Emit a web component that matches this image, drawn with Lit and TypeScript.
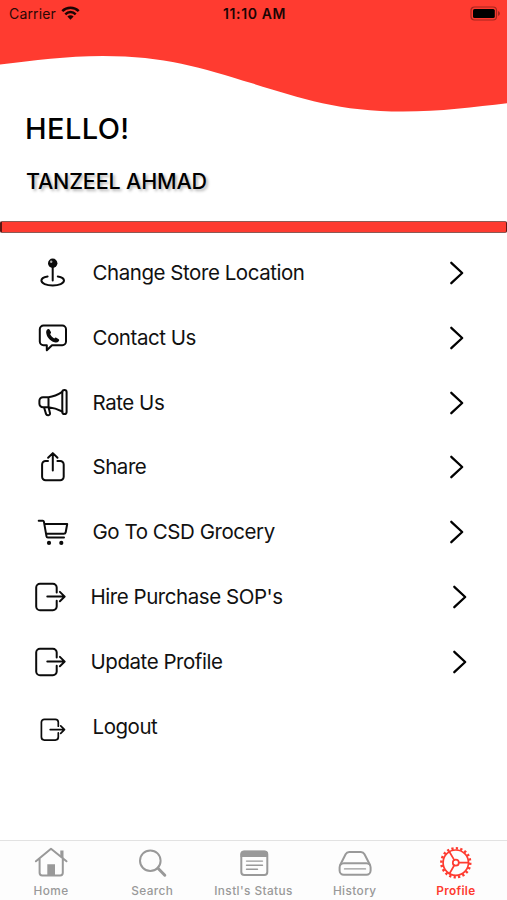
import { LitElement, html, svg, css } from "lit";
import { customElement } from "lit/decorators.js";
import { classMap } from "lit/directives/class-map.js";

const icons: Record<string, unknown> = {
  pin: svg`<path d="M12.6 21.4C8.9 22 6.4 23.6 6.4 25.6c0 2.8 5 4.9 11.3 4.9S29 28.4 29 25.6c0-2-2.5-3.6-6.2-4.2M17.7 12v13.6"/><circle class="fill" cx="17.7" cy="8.2" r="4.7"/><circle class="shine" cx="16.2" cy="6.7" r="1.2"/>`,
  contact: svg`<path d="M8.5 5.5h18.8a3.7 3.7 0 0 1 3.7 3.7v12.3a3.7 3.7 0 0 1-3.7 3.7H17l-5.2 5v-5H8.5a3.7 3.7 0 0 1-3.7-3.7V9.2a3.7 3.7 0 0 1 3.7-3.7Z"/><path class="fill" d="M12.4 9.5c.9-.8 1.900-.5 2.400.5l1.100 2.100c.3.700.1 1.200-.8 2 .8 1.900 2.200 3.300 4.200 4.300.8-.9 1.300-1.100 2-.7l2.100 1.300c.9.600 1 1.500.3 2.300-1 1.200-2.400 1.600-4.200 1-4.600-1.600-7.800-5.200-8.300-9.600-.1-1.300.3-2.500 1.200-3.200Z"/>`,
  horn: svg`<path d="M13.5 12.2H8a3.600 3.600 0 0 0-3.600 3.600v2.900A3.600 3.600 0 0 0 8 22.300h5.500ZM13.500 12.200c5.500-.6 9.500-2.500 13.800-5.300M13.500 22.300c5.500.5 9.500 2 13.800 4.200M9 22.300l2 6.600c.6 2 4.500 1.700 4-.6l-1.400-6"/><rect x="27.3" y="5" width="4.3" height="24" rx="2.1"/>`,
  share: svg`<path d="M13 12H10.6A3.5 3.5 0 0 0 7.1 15.5v12.3a3.5 3.5 0 0 0 3.5 3.5h14.6a3.5 3.5 0 0 0 3.5-3.5V15.5a3.5 3.5 0 0 0-3.5-3.5H22.4M17.8 21.5V4.2M13.1 8.8l4.7-4.7 4.7 4.7"/>`,
  cart: svg`<path d="M3.7 6.7h4.1q.9 0 1.100.9l2.600 14.800q.2 1.100 1.300 1.100H29M9.300 10H32.200L30.700 18.200q-.3 1.600-1.900 1.600H11"/><circle class="fill" cx="14" cy="28.9" r="2.1"/><circle class="fill" cx="26.3" cy="28.9" r="2.1"/>`,
  exit: svg`<path d="M21.7 13.6V8.6a3.8 3.8 0 0 0-3.8-3.8H5a3.8 3.8 0 0 0-3.8 3.8v18.8A3.8 3.8 0 0 0 5 31.2h12.9a3.8 3.8 0 0 0 3.8-3.8v-5.7M12.3 17.6H29.5M24.9 12.9l4.8 4.7-4.8 4.7"/>`,
  exitSmall: svg`<path d="M23.3 17.2V13.3a3 3 0 0 0-3-3H9.4a3 3 0 0 0-3 3v14.8a3 3 0 0 0 3 3h10.9a3 3 0 0 0 3-3v-4.2M15.2 20.6H29.5M25.7 16.9l3.8 3.7-3.8 3.7"/>`,
  home: svg`<path d="M2.9 16.3 18 3.8 33.5 16.3M6.6 14v13.8a2.6 2.6 0 0 0 2.6 2.6h18a2.6 2.6 0 0 0 2.6-2.6V14"/><path class="fill" d="M14.3 19.2H22V30h-7.7ZM27.3 5.6h3.2v8.5l-3.2-2.6Z"/>`,
  search: svg`<circle cx="16.3" cy="15.7" r="10.3"/><path class="thick" d="M24 23.2l6.8 7"/>`,
  list: svg`<rect x="5.3" y="6.5" width="26" height="23.4" rx="3"/><path class="fill" d="M4.5 12V9.2a3.5 3.5 0 0 1 3.5-3.5h20.5a3.5 3.5 0 0 1 3.5 3.5V12Z"/><path class="thin" d="M10.5 16.1h16M10.5 20.2h16M10.5 24.3h11"/>`,
  drive: svg`<rect x="2.6" y="18.2" width="31" height="11.6" rx="4.2"/><path d="M3.3 19.7 8.6 9.3q1.2-2.2 3.6-2.2h11.7q2.4 0 3.6 2.2l5.4 10.4"/><path class="thin" d="M7.5 23.9h21"/>`,
  gear: svg`<circle cx="17.8" cy="17.7" r="12.7"/><circle class="teeth" cx="17.8" cy="17.7" r="14.4" pathLength="40"/><circle cx="17.8" cy="17.7" r="3"/><path d="M20.8 17.7h9.7M16.3 15.1 11.4 6.7M16.3 20.3l-4.9 8.4"/>`,
};

@customElement("menu-row")
class MenuRow extends LitElement {
  static properties = { icon: {}, label: {}, arrow: { type: Boolean }, wide: { type: Boolean } };
  declare icon: string;
  declare label: string;
  declare arrow: boolean;
  declare wide: boolean;
  static styles = css`
    :host { display: block; }
    .row { height: 64.8px; display: flex; align-items: center; padding: 0 42px 0 35px; }
    .row.wide { padding-right: 39.5px; }
    svg { flex: none; fill: none; stroke: #0b0b0b; stroke-width: 2; stroke-linecap: round; stroke-linejoin: round; }
    .glyph { width: 36px; height: 36px; }
    .small { stroke-width: 1.7; }
    .fill { fill: #0b0b0b; stroke: none; }
    .shine { fill: #aaa; stroke: none; }
    .label { flex: 1; margin-left: 21.5px; font-size: 20.5px; letter-spacing: -0.45px; color: #111; white-space: nowrap; line-height: 26px; }
    .wide .label { margin-left: 19.5px; }
    .chevron { width: 16px; height: 26px; stroke-width: 2.3; stroke: #000; }
  `;
  render() {
    return html`<div class=${classMap({ row: true, wide: this.wide })}>
      <svg class=${classMap({ glyph: true, small: this.icon === "exitSmall" })} viewBox="0 0 36 36">${icons[this.icon]}</svg>
      <span class="label">${this.label}</span>
      ${this.arrow ? html`<svg class="chevron" viewBox="0 0 16 26"><path d="M2.3 2.8 13.2 13 2.3 23.2" /></svg>` : ""}
    </div>`;
  }
}

@customElement("tab-item")
class TabItem extends LitElement {
  static properties = { icon: {}, label: {}, active: { type: Boolean } };
  declare icon: string;
  declare label: string;
  declare active: boolean;
  static styles = css`
    :host { display: block; flex: 1; min-width: 0; }
    .tab { display: flex; flex-direction: column; align-items: center; padding-top: 4px; color: #999; }
    .tab.active { color: #fe3b30; }
    svg { width: 36px; height: 36px; fill: none; stroke: currentColor; stroke-width: 2; stroke-linecap: round; stroke-linejoin: round; }
    .active svg { stroke-width: 1.7; }
    .fill { fill: currentColor; stroke: none; }
    .thick { stroke-width: 3; }
    .thin { stroke-width: 1.4; }
    .teeth { stroke-width: 2.6; stroke-dasharray: 1 1; stroke-linecap: butt; }
    .label { font-size: 11.8px; font-weight: 500; letter-spacing: 0.42px; line-height: 16px; margin-top: 2px; white-space: nowrap; }
    .active .label { font-weight: 600; letter-spacing: 0.3px; }
  `;
  render() {
    return html`<div class=${classMap({ tab: true, active: this.active })}>
      <svg viewBox="0 0 36 36">${icons[this.icon]}</svg>
      <span class="label">${this.label}</span>
    </div>`;
  }
}

@customElement("app-root")
class AppRoot extends LitElement {
  static styles = css`
    :host { display: block; width: 507px; height: 900px; overflow: hidden; background: #fff; color: #000; font-family: Inter, "Liberation Sans", sans-serif; }
    .screen { height: 900px; display: flex; flex-direction: column; }
    .hero { height: 220.5px; box-sizing: border-box; position: relative; flex: none; }
    .wave { position: absolute; left: 0; top: 0; width: 507px; height: 115px; }
    .status { position: relative; height: 27px; display: grid; grid-template-columns: 1fr auto 1fr; align-items: center; padding: 0 6px 0 9px; font-size: 14px; color: #2a0805; }
    .carrier { display: flex; align-items: center; gap: 5px; letter-spacing: 0.15px; }
    .wifi { width: 19px; height: 14px; margin-top: -2px; }
    .time { font-weight: 600; color: #1c0504; font-size: 14px; letter-spacing: 0.6px; margin-left: -1px; }
    .battery { width: 31px; height: 15px; justify-self: end; margin-top: -1px; }
    h1 { position: relative; font-size: 29px; font-weight: 550; line-height: 36px; margin: 84px 0 0 25px; letter-spacing: 0.4px; }
    h2 { position: relative; font-size: 21.5px; font-weight: 550; line-height: 28px; margin: 20px 0 0 26px; letter-spacing: -0.15px; text-shadow: 2px 2px 3px rgba(0, 0, 0, 0.3); }
    .divider { flex: none; height: 12.5px; box-sizing: border-box; background: #fe3b30; border: 1px solid #8c5a55; border-left: 2px solid #5d1713; border-right-color: #5d1713; border-radius: 2px; }
    .menu { flex: 1; padding-top: 7.6px; }
    .tabs { flex: none; height: 60px; box-sizing: border-box; border-top: 1.5px solid #e2e2e2; display: flex; padding: 0 0.5px; background: #fdfdfd; }
  `;
  render() {
    return html`<div class="screen">
      <header class="hero">
        <svg class="wave" viewBox="0 0 507 115"><path fill="#ff3b30" d="M0 0H507V103.3C475 107 440 111.6 403 111.6C340 111.6 300 98 253 83.6C200 67.5 165 56 103 56C65 56 35 60.5 0 64.5Z"/></svg>
        <div class="status">
          <div class="carrier"><span>Carrier</span>
            <svg class="wifi" viewBox="0 0 19 14" fill="none" stroke="#1c0504" stroke-width="2.5"><path d="M1.3 5.2a11.6 11.6 0 0 1 16.4 0M4.3 8.3a7.3 7.3 0 0 1 10.4 0"/><path fill="#1c0504" stroke="none" d="M6.4 10.5a4.4 4.4 0 0 1 6.2 0L9.5 13.7Z"/></svg>
          </div>
          <span class="time">11:10 AM</span>
          <svg class="battery" viewBox="0 0 31 15"><rect x="1" y="1" width="25.5" height="13" rx="3.5" fill="none" stroke="#a5261f" stroke-width="1.2"/><rect x="3" y="3" width="21.8" height="9" rx="1.6" fill="#000"/><path d="M28 5v5q2-.7 2-2.5T28 5Z" fill="#a5261f"/></svg>
        </div>
        <h1>HELLO!</h1>
        <h2>TANZEEL AHMAD</h2>
      </header>
      <div class="divider"></div>
      <main class="menu">
        <menu-row icon="pin" label="Change Store Location" arrow></menu-row>
        <menu-row icon="contact" label="Contact Us" arrow></menu-row>
        <menu-row icon="horn" label="Rate Us" arrow></menu-row>
        <menu-row icon="share" label="Share" arrow></menu-row>
        <menu-row icon="cart" label="Go To CSD Grocery" arrow></menu-row>
        <menu-row icon="exit" label="Hire Purchase SOP's" arrow wide></menu-row>
        <menu-row icon="exit" label="Update Profile" arrow wide></menu-row>
        <menu-row icon="exitSmall" label="Logout"></menu-row>
      </main>
      <nav class="tabs">
        <tab-item icon="home" label="Home"></tab-item>
        <tab-item icon="search" label="Search"></tab-item>
        <tab-item icon="list" label="Instl's Status"></tab-item>
        <tab-item icon="drive" label="History"></tab-item>
        <tab-item icon="gear" label="Profile" active></tab-item>
      </nav>
    </div>`;
  }
}
